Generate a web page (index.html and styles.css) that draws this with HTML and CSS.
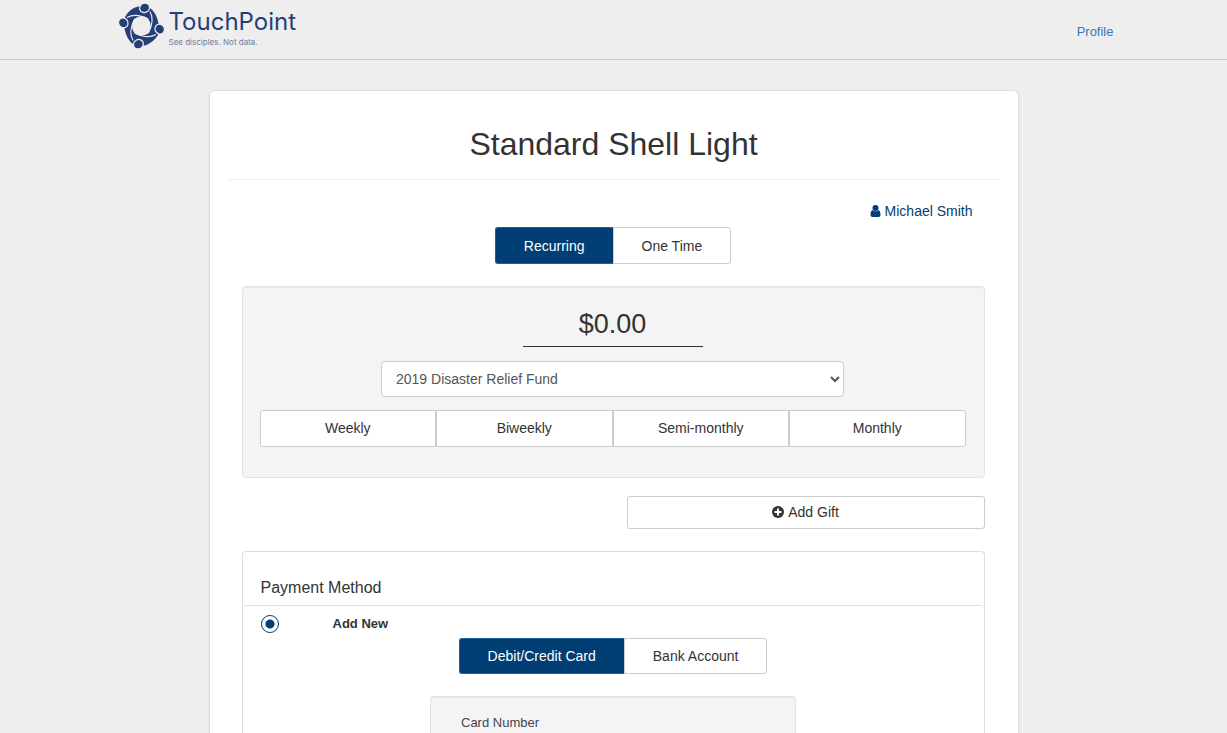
FILE: index.html
```html
<!DOCTYPE html>
<html lang="en">
<head>
<meta charset="utf-8">
<title>Standard Shell Light</title>
<link rel="stylesheet" href="styles.css">
</head>
<body>
<header class="site-header">
  <div class="header-inner">
    <a class="brand" href="#">
      <svg class="brand-mark" viewBox="0 0 52 52" aria-hidden="true">
        <path d="M9 17Q13 9 22 6.500L34 8Q40 12 42.500 23L42 35Q38 42 29 45.500L17 44Q11 40 8.500 29Z" fill="#243f77"/>
        <path d="M18 19Q25 14 32 18.500Q37 25 33 33Q26 38 18.500 33.500Q14 27 18 19Z" fill="#eee"/>
        <g id="arm">
          <path d="M11 17.500Q20 12.500 32 19" fill="none" stroke="#eee" stroke-width="1.100"/>
          <ellipse cx="28.600" cy="7.800" rx="5.100" ry="4.600" transform="rotate(-30 28.600 7.800)" fill="#243f77" stroke="#eee" stroke-width="1.200"/>
        </g>
        <use href="#arm" transform="rotate(90 25.500 26)"/>
        <use href="#arm" transform="rotate(180 25.500 26)"/>
        <use href="#arm" transform="rotate(270 25.500 26)"/>
      </svg>
      <span class="brand-text">
        <span class="brand-name">TouchPoint</span>
        <span class="brand-tag">See disciples. Not data.</span>
      </span>
    </a>
    <a class="profile" href="#">Profile</a>
  </div>
</header>
<main class="card">
  <h1 class="title">Standard Shell Light</h1>
  <form class="content">
    <a class="user" href="#">
      <svg class="user-icon" viewBox="0 0 10 12" aria-hidden="true"><circle cx="5" cy="3" r="3"/><path d="M2 5C.600 5.500 0 7.500 0 9.800 0 11.200.900 12 2 12h6c1.100 0 2-.800 2-2.200C10 7.500 9.400 5.500 8 5 6.500 6.800 3.500 6.800 2 5Z"/></svg>
      <span>Michael Smith</span>
    </a>
    <div class="toggle">
      <button class="btn active" type="button">Recurring</button><button class="btn" type="button">One Time</button>
    </div>
    <section class="well gift">
      <input class="amount" type="text" value="$0.00" aria-label="Amount">
      <select class="fund" aria-label="Fund"><option>2019 Disaster Relief Fund</option></select>
      <div class="frequency">
        <button class="btn" type="button">Weekly</button>
        <button class="btn" type="button">Biweekly</button>
        <button class="btn" type="button">Semi-monthly</button>
        <button class="btn" type="button">Monthly</button>
      </div>
    </section>
    <button class="btn add-gift" type="button">
      <svg class="add-icon" viewBox="0 0 12 12" aria-hidden="true"><circle cx="6" cy="6" r="6" fill="#333"/><path d="M6 2.500v7M2.500 6h7" stroke="#fff" stroke-width="2"/></svg>
      <span>Add Gift</span>
    </button>
    <section class="payment">
      <h2 class="payment-title">Payment Method</h2>
      <div class="payment-body">
        <div class="method">
          <input class="radio" type="radio" id="add-new" name="method" checked>
          <label class="method-label" for="add-new">Add New</label>
        </div>
        <div class="toggle">
          <button class="btn active" type="button">Debit/Credit Card</button><button class="btn" type="button">Bank Account</button>
        </div>
        <div class="well card-fields">
          <span class="field-label">Card Number</span>
        </div>
      </div>
    </section>
  </form>
</main>
</body>
</html>
```
FILE: styles.css
```css
* { box-sizing: border-box; }
body {
  margin: 0;
  min-height: 100vh;
  display: flex;
  flex-direction: column;
  background: #eee;
  color: #333;
  font: 14px/20px "Liberation Sans", Arial, sans-serif;
}
a { color: #337ab7; text-decoration: none; }
.site-header { border-bottom: 1px solid #ccc; }
.header-inner {
  max-width: 1000px;
  height: 59px;
  margin: 0 auto;
  display: flex;
  justify-content: space-between;
}
.brand { display: flex; padding-left: 2px; color: #243f77; }
.brand-mark { width: 52px; height: 52px; }
.brand-text { display: flex; flex-direction: column; padding: 8px 0 0 1px; }
.brand-name { font: 24px/28px Inter, sans-serif; }
.brand-tag { font: 8px/12px Inter, sans-serif; color: #6b7da3; }
.profile { padding-top: 22px; font-size: 13px; }
.card {
  flex: 1;
  width: 100%;
  max-width: 810px;
  margin: 30px auto 0;
  padding: 0 18px;
  display: flex;
  flex-direction: column;
  background: #fff;
  border: 1px solid #ddd;
  border-bottom: 0;
  border-radius: 6px 6px 0 0;
  box-shadow: 0 1px 2px rgba(0, 0, 0, .1);
}
.title {
  margin: 0;
  padding: 34px 0 16px;
  border-bottom: 1px solid #eee;
  font-size: 32px;
  line-height: 38px;
  font-weight: 400;
  text-align: center;
}
.content {
  flex: 1;
  display: flex;
  flex-direction: column;
  align-items: center;
  padding: 21px 15px 0 14px;
}
.user {
  align-self: flex-end;
  display: flex;
  align-items: center;
  gap: 4px;
  margin: 0 12px 6px 0;
  color: #003e73;
}
.user-icon { width: 11px; height: 12px; fill: #003e73; }
.btn {
  padding: 8px 28px 7px;
  border: 1px solid #ccc;
  border-radius: 3px;
  background: #fff;
  color: #333;
  font: inherit;
}
.btn.active { background: #003e73; border-color: #1f5f99; color: #fff; }
.toggle { display: grid; grid-template-columns: auto auto; justify-content: center; }
.toggle .btn:first-child { border-radius: 3px 0 0 3px; border-right: 0; }
.toggle .btn:last-child { border-radius: 0 3px 3px 0; }
.well {
  background: #f4f4f4;
  border: 1px solid #e3e3e3;
  border-radius: 4px;
  box-shadow: inset 0 1px 1px rgba(0, 0, 0, .05);
}
.gift {
  width: 100%;
  margin: 22px 0 18px;
  padding: 16px 18px 30px 17px;
  display: flex;
  flex-direction: column;
  align-items: center;
}
.amount {
  width: 180px;
  height: 44px;
  padding: 0;
  border: 0;
  border-bottom: 1px solid #333;
  background: transparent;
  color: #333;
  font: inherit;
  font-size: 27px;
  text-align: center;
}
.fund {
  width: 100%;
  max-width: 463px;
  height: 36px;
  margin: 14px 0 13px;
  padding: 0 10px;
  border: 1px solid #ccc;
  border-radius: 4px;
  background-color: #fff;
  color: #555;
  font: inherit;
}
.frequency { width: 100%; display: grid; grid-template-columns: repeat(4, 1fr); }
.frequency .btn { padding: 7px 8px; line-height: 21px; border-radius: 0; }
.frequency .btn:first-child { border-radius: 3px 0 0 3px; }
.frequency .btn:last-child { border-radius: 0 3px 3px 0; }
.add-gift {
  align-self: flex-end;
  width: 358px;
  max-width: 100%;
  display: flex;
  justify-content: center;
  align-items: center;
  gap: 4px;
  padding: 5px 12px 6px;
}
.add-icon { width: 12px; height: 12px; }
.payment {
  flex: 1;
  width: 100%;
  margin-top: 22px;
  border: 1px solid #ddd;
  border-bottom: 0;
  border-radius: 4px 4px 0 0;
}
.payment-title {
  margin: 0;
  padding: 26px 18px 7px;
  font-size: 16px;
  line-height: 20px;
  font-weight: 400;
}
.payment-body {
  padding: 8px 18px 0;
  border-top: 1px solid #ddd;
  border-radius: 4px 4px 0 0;
}
.method { display: flex; align-items: center; gap: 54px; margin-bottom: 4px; }
.radio {
  appearance: none;
  width: 18px;
  height: 18px;
  margin: 0;
  border: 1px solid #003e73;
  border-radius: 50%;
  background: #fff radial-gradient(circle, #003e73 4px, transparent 5px);
}
.method-label { font-size: 13px; font-weight: 700; }
.payment .btn { padding-top: 7px; }
.card-fields {
  max-width: 366px;
  margin: 22px auto 0;
  padding: 16px 30px 0;
  border-bottom: 0;
  border-radius: 4px 4px 0 0;
}
.field-label { display: block; color: #444; font-size: 13px; }
```
